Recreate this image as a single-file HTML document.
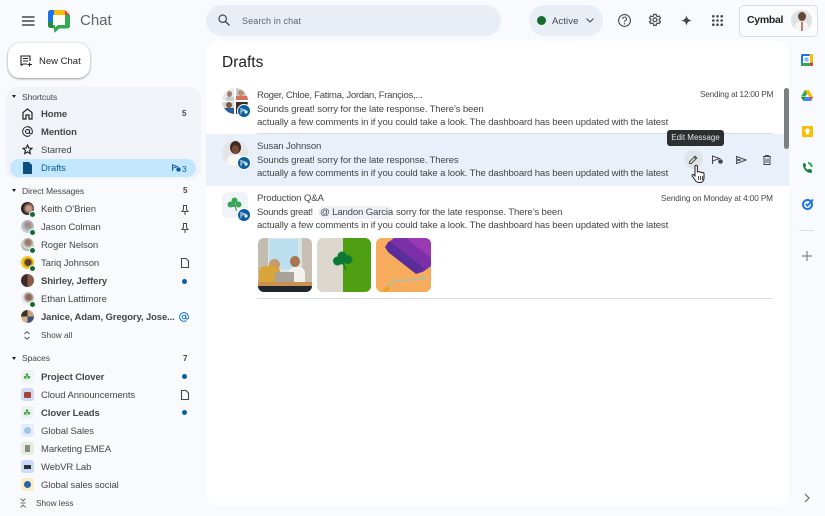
<!DOCTYPE html>
<html><head><meta charset="utf-8">
<style>
html,body{margin:0;padding:0;width:825px;height:516px;overflow:hidden;background:#f8fafe;font-family:"Liberation Sans",sans-serif;color:#444746}
.t{position:absolute;white-space:nowrap;font-size:9.5px;line-height:14px;letter-spacing:.1px}
.b{font-weight:bold;color:#1f1f1f;font-size:9.5px}
.n{position:absolute;left:41px;margin-top:1px;white-space:nowrap;font-size:9.5px;line-height:14px;letter-spacing:-.08px;color:#444746}
.h{position:absolute;left:22px;white-space:nowrap;font-size:8.5px;line-height:12px;color:#444746;letter-spacing:-.08px}
.tri{position:absolute;left:12px;width:0;height:0;border-left:2.5px solid transparent;border-right:2.5px solid transparent;border-top:3px solid #1f1f1f}
.av{position:absolute;left:21px;width:13px;height:13px;border-radius:50%}
.dot{position:absolute;left:29px;width:5px;height:5px;border-radius:50%;background:#146c2e;border:.5px solid #fff}
.sp{position:absolute;left:21px;width:13px;height:13px;border-radius:3px}
.ud{position:absolute;left:182px;width:5px;height:5px;border-radius:50%;background:#0b5e9e}
svg{position:absolute;overflow:visible}
.m{position:absolute;left:257px;white-space:nowrap;font-size:9.6px;line-height:13px;color:#444746;letter-spacing:-.15px}
.s{position:absolute;white-space:nowrap;font-size:8.2px;line-height:14px;letter-spacing:-.17px;color:#444746}
.bd{position:absolute;left:237px;width:12px;height:12px;border-radius:50%;background:#0b5e9e;border:1px solid #fff}
</style></head><body>

<!-- top bar -->
<svg style="left:22px;top:16px" width="13" height="10"><path d="M0 1h12.500M0 5h12.500M0 9h12.500" stroke="#444746" stroke-width="1.400"/></svg>
<svg style="left:48px;top:10px" width="23" height="23" viewBox="0 0 23 23">
<path d="M0 12V2.500A2.500 2.500 0 0 1 2.500 0H6V12z" fill="#1a73e8"/>
<path d="M6 0h11v5H6z" fill="#fbbc04"/>
<path d="M17 0l5 5h-5z" fill="#ea4335"/>
<path d="M0 12h5v6H2.500A2.500 2.500 0 0 1 0 15.500z" fill="#1e8e3e"/>
<path d="M22 5v11a2.500 2.500 0 0 1-2.500 2.500H11.500L6 23V18.500H5V12h12V5z" fill="#34a853"/>
<path d="M5 5h12v10H10l-3 2.500V15H5z" fill="#fff"/>
</svg>
<div class="t" style="left:80px;top:11px;font-size:15px;line-height:19px;color:#5f6368;letter-spacing:0">Chat</div>

<div style="position:absolute;left:8px;top:43px;width:82px;height:35px;background:#fff;border-radius:12px;box-shadow:0 1px 2px rgba(60,64,67,.45),0 0 2px rgba(60,64,67,.2)"></div>
<svg style="left:20px;top:55px" width="13" height="12" viewBox="0 0 13 12"><path d="M1 10.500V1h9v5M3 3.500h5M3 6h5M1 10.500l2-1.500h4M9.500 7.500v4M7.500 9.500h4.500" fill="none" stroke="#1f1f1f" stroke-width="1.100"/></svg>
<div class="t" style="left:39px;top:55px;color:#1f1f1f;font-size:9.500px;letter-spacing:0">New Chat</div>

<!-- search -->
<div style="position:absolute;left:206px;top:5px;width:295px;height:31px;background:#e9eef6;border-radius:16px"></div>
<svg style="left:218px;top:14px" width="12" height="12" viewBox="0 0 12 12"><circle cx="4.700" cy="4.700" r="3.700" fill="none" stroke="#444746" stroke-width="1.200"/><path d="M7.500 7.500l4 4" stroke="#444746" stroke-width="1.300"/></svg>
<div class="t" style="left:242px;top:14px;font-size:9px;color:#5f6368">Search in chat</div>

<!-- status -->
<div style="position:absolute;left:529px;top:5px;width:74px;height:31px;background:#e9eef6;border-radius:16px"></div>
<div style="position:absolute;left:537px;top:16px;width:9px;height:9px;border-radius:50%;background:#146c2e"></div>
<div class="t" style="left:552px;top:15px;font-size:9.500px;color:#444746">Active</div>
<svg style="left:586px;top:18px" width="8" height="5"><path d="M.5.500l3.500 3.500 3.500-3.500" fill="none" stroke="#444746"/></svg>
<svg style="left:618px;top:14px" width="13" height="13" viewBox="0 0 13 13"><circle cx="6.500" cy="6.500" r="5.900" fill="none" stroke="#444746" stroke-width="1.100"/><path d="M4.700 5a1.900 1.900 0 1 1 2.800 1.600c-.7.400-1 .8-1 1.500" fill="none" stroke="#444746"/><circle cx="6.500" cy="9.800" r=".7" fill="#444746"/></svg>
<svg style="left:648px;top:13px" width="14" height="14" viewBox="0 0 14 14"><path d="M5.800.8h2.400l.3 1.700 1.200.6 1.600-.6 1.200 2-1.300 1.100v1.400l1.300 1.100-1.200 2-1.600-.6-1.200.7-.3 1.700H5.800l-.3-1.700-1.200-.7-1.600.6-1.200-2L2.800 7V5.600L1.500 4.500l1.200-2 1.600.6 1.200-.6z" transform="translate(0 .5)" fill="none" stroke="#444746" stroke-width="1.200"/><circle cx="7" cy="6.800" r="1.900" fill="none" stroke="#444746" stroke-width="1.200"/></svg>
<svg style="left:681px;top:15px" width="11" height="11" viewBox="0 0 11 11"><path d="M5.500 0C6 3.500 7.500 5 11 5.500 7.500 6 6 7.500 5.500 11 5 7.500 3.500 6 0 5.500 3.500 5 5 3.500 5.500 0z" fill="#444746"/></svg>
<svg style="left:712px;top:15px" width="11" height="11" fill="#444746"><circle cx="1.300" cy="1.300" r="1.300"/><circle cx="5.500" cy="1.300" r="1.300"/><circle cx="9.700" cy="1.300" r="1.300"/><circle cx="1.300" cy="5.500" r="1.300"/><circle cx="5.500" cy="5.500" r="1.300"/><circle cx="9.700" cy="5.500" r="1.300"/><circle cx="1.300" cy="9.700" r="1.300"/><circle cx="5.500" cy="9.700" r="1.300"/><circle cx="9.700" cy="9.700" r="1.300"/></svg>
<div style="position:absolute;left:739px;top:5px;width:77px;height:30px;border:1px solid #dadce0;border-radius:5px;background:#fbfcfe"></div>
<div class="t" style="left:747px;top:13px;font-size:10.500px;font-weight:bold;color:#1f1f1f;letter-spacing:-.3px">Cymbal</div>
<div style="position:absolute;left:791px;top:10px;width:21px;height:21px;border-radius:50%;overflow:hidden;background:#dfe2e3">
 <div style="position:absolute;left:7px;top:2px;width:8px;height:9px;border-radius:50%;background:#6a4636"></div>
 <div style="position:absolute;left:4px;top:12px;width:13px;height:10px;border-radius:4px;background:#f4f4f4"></div>
 <div style="position:absolute;left:10px;top:12px;width:2px;height:9px;background:#c77a70"></div>
</div>

<!-- Shortcuts panel -->
<div style="position:absolute;left:6px;top:87px;width:195px;height:92px;background:#f0f3f8;border-radius:11px"></div>
<div style="position:absolute;left:10px;top:159px;width:186px;height:18px;background:#c2e7ff;border-radius:9px"></div>
<div class="tri" style="top:95px"></div>
<div class="h" style="top:91px">Shortcuts</div>
<svg style="left:22px;top:108px" width="11" height="12" viewBox="0 0 11 12"><path d="M1 11V4.500L5.500 1 10 4.500V11H7V7H4v4z" fill="none" stroke="#1f1f1f" stroke-width="1.200"/></svg>
<div class="n b" style="top:107px">Home</div>
<div class="t" style="left:182px;top:107px;font-size:8px;font-weight:bold;color:#444746">5</div>
<svg style="left:22px;top:126px" width="11" height="11" viewBox="0 0 11 11"><circle cx="5.500" cy="5.500" r="2" fill="none" stroke="#1f1f1f"/><path d="M7.500 3.500V6.500a1.400 1.400 0 0 0 2.800 0V5.500a4.800 4.800 0 1 0-2 3.900" fill="none" stroke="#1f1f1f"/></svg>
<div class="n b" style="top:125px">Mention</div>
<svg style="left:22px;top:144px" width="11" height="11" viewBox="0 0 11 11"><path d="M5.500 1l1.300 3 3.200.300-2.400 2.100.7 3.200-2.800-1.700-2.800 1.700.7-3.200L1 4.300 4.200 4z" fill="none" stroke="#1f1f1f" stroke-width="1.100"/></svg>
<div class="n" style="top:143px">Starred</div>
<svg style="left:23px;top:162px" width="9" height="12" viewBox="0 0 9 12"><path d="M0 0h6l3 3v9H0z" fill="#0b4f80"/></svg>
<div class="n" style="top:161px;color:#0b5e9e">Drafts</div>
<svg style="left:172px;top:164px" width="9" height="8" viewBox="0 0 9 8"><path d="M.5.800L5 2.500.5 4.500zM.5 4.500V7" fill="none" stroke="#0b5e9e"/><circle cx="6.500" cy="5.500" r="2.200" fill="#0b5e9e"/></svg>
<div class="t" style="left:182px;top:162px;font-size:8.500px;color:#0b5e9e">3</div>

<!-- DMs -->
<div class="tri" style="top:189px"></div>
<div class="h" style="top:185px">Direct Messages</div>
<div class="t" style="left:183px;top:184px;font-size:8px;font-weight:bold">5</div>

<div class="av" style="top:202px;background:radial-gradient(circle at 60% 50%,#c99a86 25%,#2b201c 60%)"></div><div class="dot" style="top:211px"></div>
<div class="n" style="top:202px">Keith O’Brien</div>
<svg style="left:181px;top:205px" width="8" height="10" viewBox="0 0 8 10"><path d="M2 .5h4M2.500.5v4L1 6.500h6L5.500 4.500v-4M4 6.500V10" fill="none" stroke="#444746"/></svg>

<div class="av" style="top:220px;background:radial-gradient(circle at 55% 40%,#a28f85 22%,#b8c5d8 55%,#dfe3ea 90%)"></div><div class="dot" style="top:229px"></div>
<div class="n" style="top:220px">Jason Colman</div>
<svg style="left:181px;top:223px" width="8" height="10" viewBox="0 0 8 10"><path d="M2 .5h4M2.500.5v4L1 6.500h6L5.500 4.500v-4M4 6.500V10" fill="none" stroke="#444746"/></svg>

<div class="av" style="top:238px;background:radial-gradient(circle at 55% 35%,#9a7a68 22%,#d8dbd6 50%,#7d8a7e 90%)"></div><div class="dot" style="top:247px"></div>
<div class="n" style="top:238px">Roger Nelson</div>

<div class="av" style="top:256px;background:radial-gradient(circle at 55% 50%,#5b3d2e 28%,#f6c518 50%)"></div><div class="dot" style="top:265px"></div>
<div class="n" style="top:256px">Tariq Johnson</div>
<svg style="left:181px;top:258px" width="8" height="10" viewBox="0 0 8 10"><path d="M.5.500h4.500l2.500 2.500v6.500h-7z" fill="none" stroke="#444746" stroke-width="1.100"/></svg>

<div class="av" style="top:274px;background:linear-gradient(90deg,#3b2a26 50%,#8c5a48 50%)"></div>
<div class="n b" style="top:274px">Shirley, Jeffery</div>
<div class="ud" style="top:279px;left:182px"></div>

<div class="av" style="top:292px;background:radial-gradient(circle at 60% 40%,#8a6a58 22%,#e9ecf1 55%)"></div><div class="dot" style="top:301px"></div>
<div class="n" style="top:292px">Ethan Lattimore</div>

<div class="av" style="top:310px;background:conic-gradient(#c9a27a 0 25%,#43527a 0 50%,#d7b48c 0 75%,#3c3027 0)"></div>
<div class="n b" style="top:310px;letter-spacing:-.12px">Janice, Adam, Gregory, Jose...</div>
<svg style="left:179px;top:312px" width="10" height="10" viewBox="0 0 11 11"><circle cx="5.500" cy="5.500" r="2" fill="none" stroke="#0b74c4"/><path d="M7.500 3.500V6.500a1.400 1.400 0 0 0 2.800 0V5.500a4.800 4.800 0 1 0-2 3.900" fill="none" stroke="#0b74c4"/></svg>

<svg style="left:24px;top:331px" width="6" height="9" viewBox="0 0 6 9"><path d="M.5 3L3 .7 5.500 3M.5 6L3 8.300 5.500 6" fill="none" stroke="#444746" stroke-width=".9"/></svg>
<div class="t" style="left:41px;top:328px;font-size:8.300px;letter-spacing:0">Show all</div>

<!-- Spaces -->
<div class="tri" style="top:357px"></div>
<div class="h" style="top:352px">Spaces</div>
<div class="t" style="left:183px;top:352px;font-size:8px;font-weight:bold">7</div>

<div class="sp" style="top:370px;background:#eef2f6"></div><div class="t" style="left:23px;top:370px;font-size:9px;color:#3aa63a">☘</div>
<div class="n b" style="top:370px">Project Clover</div><div class="ud" style="top:374px"></div>

<div class="sp" style="top:388px;background:#cfdcf5"></div><div style="position:absolute;left:24px;top:392px;width:7px;height:6px;background:#a8443a;border-radius:1px"></div>
<div class="n" style="top:388px">Cloud Announcements</div>
<svg style="left:181px;top:390px" width="8" height="10" viewBox="0 0 8 10"><path d="M.5.500h4.500l2.500 2.500v6.500h-7z" fill="none" stroke="#444746" stroke-width="1.100"/></svg>

<div class="sp" style="top:406px;background:#eef2f6"></div><div class="t" style="left:23px;top:406px;font-size:9px;color:#3aa63a">☘</div>
<div class="n b" style="top:406px">Clover Leads</div><div class="ud" style="top:410px"></div>

<div class="sp" style="top:424px;background:#e3edfb"></div><div style="position:absolute;left:24px;top:427px;width:7px;height:7px;border-radius:50%;background:#9cc8e6"></div>
<div class="n" style="top:424px">Global Sales</div>

<div class="sp" style="top:442px;background:#e4ece4"></div><div style="position:absolute;left:25px;top:445px;width:5px;height:7px;background:#8a8a7e"></div>
<div class="n" style="top:442px">Marketing EMEA</div>

<div class="sp" style="top:460px;background:#c9dcf7"></div><div style="position:absolute;left:24px;top:465px;width:7px;height:4px;background:#2a2f3a"></div>
<div class="n" style="top:460px">WebVR Lab</div>

<div class="sp" style="top:478px;background:#fbeec2"></div><div style="position:absolute;left:24px;top:481px;width:7px;height:7px;border-radius:50%;background:#2a62a8"></div>
<div class="n" style="top:478px">Global sales social</div>

<svg style="left:20px;top:498px" width="6" height="10" viewBox="0 0 6 10"><path d="M.5.500L3 3 5.500.500M.5 9.500L3 7l2.500 2.500M.5 5h5" fill="none" stroke="#444746" stroke-width=".8"/></svg>
<div class="t" style="left:36px;top:496px;font-size:8.300px;letter-spacing:-.05px">Show less</div>

<!-- Main -->
<div style="position:absolute;left:206px;top:41px;width:583px;height:465px;background:#fff;border-radius:12px"></div>
<div style="position:absolute;left:206px;top:134px;width:583px;height:52px;background:#e9f0fa"></div>
<div class="t" style="left:222px;top:53px;font-size:15.500px;line-height:19px;color:#1f1f1f;letter-spacing:0">Drafts</div>

<!-- row 1 -->
<div style="position:absolute;left:222px;top:88px;width:26px;height:26px;border-radius:50%;overflow:hidden;background:#fff">
 <div style="position:absolute;left:0;top:0;width:12px;height:12px;background:#e6e9ec"></div>
 <div style="position:absolute;left:5px;top:3px;width:5px;height:6px;border-radius:50%;background:#a8796a"></div>
 <div style="position:absolute;left:4px;top:9px;width:8px;height:4px;background:#c5cdd4"></div>
 <div style="position:absolute;left:14px;top:0;width:12px;height:12px;background:#bccdd8"></div>
 <div style="position:absolute;left:16px;top:2px;width:6px;height:6px;border-radius:50%;background:#c98a6e"></div>
 <div style="position:absolute;left:14px;top:8px;width:12px;height:4px;background:#d9705a"></div>
 <div style="position:absolute;left:0;top:14px;width:12px;height:12px;background:#d9d6c8"></div>
 <div style="position:absolute;left:4px;top:14px;width:6px;height:6px;border-radius:50%;background:#7a5a48"></div>
 <div style="position:absolute;left:2px;top:20px;width:10px;height:6px;background:#2f5a9a"></div>
 <div style="position:absolute;left:14px;top:14px;width:12px;height:12px;background:#3a2d28"></div>
</div>
<div class="bd" style="top:104px"><svg style="left:2.500px;top:3px" width="7" height="6" viewBox="0 0 7 6"><path d="M0 .5L4 2 0 3.500zM0 3.500V6" fill="none" stroke="#dbe9f6" stroke-width=".9"/><circle cx="5" cy="4" r="1.700" fill="#dbe9f6"/></svg></div>
<div class="m" style="top:89px;letter-spacing:-.3px">Roger, Chloe, Fatima, Jordan, Françios,...</div>
<div class="m" style="top:103px">Sounds great! sorry for the late response. There’s been</div>
<div class="m" style="top:116px">actually a few comments in if you could take a look. The dashboard has been updated with the latest</div>
<div class="s" style="left:700px;top:88px">Sending at 12:00 PM</div>
<div style="position:absolute;left:257px;top:133px;width:516px;height:1px;background:#d9dce1"></div>

<!-- row 2 -->
<div style="position:absolute;left:222px;top:140px;width:26px;height:26px;border-radius:50%;overflow:hidden;background:#e4e5e6">
 <div style="position:absolute;left:8px;top:1px;width:11px;height:13px;border-radius:50%;background:#3f2a22"></div>
 <div style="position:absolute;left:10px;top:5px;width:7px;height:9px;border-radius:50%;background:#7a4c38"></div>
 <div style="position:absolute;left:5px;top:15px;width:16px;height:12px;border-radius:5px;background:#f7f7f7"></div>
</div>
<div class="bd" style="top:156px"><svg style="left:2.500px;top:3px" width="7" height="6" viewBox="0 0 7 6"><path d="M0 .5L4 2 0 3.500zM0 3.500V6" fill="none" stroke="#dbe9f6" stroke-width=".9"/><circle cx="5" cy="4" r="1.700" fill="#dbe9f6"/></svg></div>
<div class="m" style="top:140px">Susan Johnson</div>
<div class="m" style="top:154px">Sounds great! sorry for the late response. Theres</div>
<div class="m" style="top:167px">actually a few comments in if you could take a look. The dashboard has been updated with the latest</div>

<div style="position:absolute;left:684px;top:150px;width:19px;height:19px;border-radius:50%;background:#dfe3e8"></div>
<svg style="left:689px;top:155px" width="9" height="9" viewBox="0 0 9 9"><path d="M.5 8.500v-1.800L6 1.200l1.800 1.800L2.300 8.500zM5.300 2l1.800 1.800" fill="none" stroke="#444746" stroke-width="1"/></svg>
<svg style="left:712px;top:155px" width="11" height="10" viewBox="0 0 11 10"><path d="M.5 1l7 2.500-7 2.500zM.5 6V9" fill="none" stroke="#444746" stroke-width="1"/><circle cx="8.500" cy="6.500" r="2.300" fill="#444746"/></svg>
<svg style="left:736px;top:156px" width="11" height="8" viewBox="0 0 11 8"><path d="M.5.500L10 4 .5 7.500V4.800L5 4 .5 3.200z" fill="none" stroke="#444746" stroke-width="1"/></svg>
<svg style="left:763px;top:155px" width="8" height="10" viewBox="0 0 8 10"><path d="M0 1.500h8M2.500 1.500V.5h3v1M1 1.500V9.500h6v-8M3 3.500v4.500M5 3.500v4.500" fill="none" stroke="#444746" stroke-width="1"/></svg>
<svg style="left:691px;top:165px" width="16" height="19" viewBox="0 0 16 19"><path d="M4 1.500a1.200 1.200 0 0 1 2.400 0V7l1-.3c.6-.2 1.200 0 1.400.5l.8-.2c.6-.1 1.100.2 1.300.6l.8-.1c.8 0 1.300.6 1.300 1.300V13c0 2.500-1.500 4.500-4 4.500H8c-1.800 0-3-1-4-2.500L1.200 11c-.6-.9.600-2 1.500-1.200L4 11z" fill="#fff" stroke="#1f1f1f" stroke-width="1"/><path d="M7.500 11v4M9.500 11v4M11.500 11v4" stroke="#1f1f1f" stroke-width=".8"/></svg>

<div style="position:absolute;left:667px;top:130px;width:57px;height:16px;background:#2d2e30;border-radius:3px;color:#e3e3e3;font-size:8px;line-height:16px;text-align:center;white-space:nowrap">Edit Message</div>

<!-- row 3 -->
<div style="position:absolute;left:222px;top:192px;width:26px;height:26px;border-radius:6px;background:#f0f4f9"></div>
<svg style="left:227px;top:197px" width="15" height="15" viewBox="0 0 15 15" fill="#34a853"><circle cx="7.500" cy="3.500" r="3"/><circle cx="3.500" cy="7.500" r="3"/><circle cx="11.500" cy="7.500" r="3"/><circle cx="6" cy="8" r="2"/><path d="M7.500 7l2 7" stroke="#1e8e3e" fill="none"/></svg>
<div class="bd" style="top:208px"><svg style="left:2.500px;top:3px" width="7" height="6" viewBox="0 0 7 6"><path d="M0 .5L4 2 0 3.500zM0 3.500V6" fill="none" stroke="#dbe9f6" stroke-width=".9"/><circle cx="5" cy="4" r="1.700" fill="#dbe9f6"/></svg></div>
<div class="m" style="top:192px">Production Q&amp;A</div>
<div class="m" style="top:206px;letter-spacing:-.3px">Sounds great!</div>
<div style="position:absolute;left:318px;top:206px;width:75px;height:13px;border-radius:7px;background:#eef2f8"></div>
<div class="m" style="top:206px;left:320px">@ Landon Garcia</div>
<div class="m" style="top:206px;left:396px">sorry for the late response. There’s been</div>
<div class="m" style="top:219px">actually a few comments in if you could take a look. The dashboard has been updated with the latest</div>
<div class="s" style="left:661px;top:192px;letter-spacing:-.1px">Sending on Monday at 4:00 PM</div>

<!-- images -->
<div style="position:absolute;left:258px;top:238px;width:54px;height:54px;border-radius:6px;overflow:hidden;background:#d9e4e6">
 <div style="position:absolute;left:0;top:0;width:10px;height:44px;background:#c2bcae"></div>
 <div style="position:absolute;left:11px;top:1px;width:29px;height:30px;background:#bcdff0"></div>
 <div style="position:absolute;left:44px;top:0;width:10px;height:44px;background:#c7bfb4"></div>
 <div style="position:absolute;left:11px;top:21px;width:11px;height:11px;border-radius:50%;background:#c99a6a"></div>
 <div style="position:absolute;left:1px;top:28px;width:21px;height:16px;border-radius:6px 6px 0 0;background:#d9a43a"></div>
 <div style="position:absolute;left:32px;top:18px;width:10px;height:11px;border-radius:50%;background:#a8764e"></div>
 <div style="position:absolute;left:31px;top:29px;width:16px;height:15px;border-radius:6px 6px 0 0;background:#f4f1ee"></div>
 <div style="position:absolute;left:17px;top:34px;width:19px;height:10px;background:#a9a299"></div>
 <div style="position:absolute;left:0;top:44px;width:54px;height:4px;background:#c9934f"></div>
 <div style="position:absolute;left:0;top:48px;width:54px;height:6px;background:#20262e"></div>
</div>
<div style="position:absolute;left:317px;top:238px;width:54px;height:54px;border-radius:6px;overflow:hidden;background:#dcd8d0">
 <div style="position:absolute;left:26px;top:0;width:28px;height:54px;background:#4f9f12"></div>
 <svg style="left:16px;top:13px" width="20" height="19" viewBox="0 0 20 19" fill="#0d7a34"><circle cx="9" cy="5" r="4.500"/><circle cx="4.500" cy="10" r="4.500"/><circle cx="15" cy="8.500" r="4.500"/><circle cx="9" cy="10" r="3.500"/><path d="M10 12l3 7" stroke="#0d7a34" stroke-width="1.300"/></svg>
</div>
<div style="position:absolute;left:376px;top:238px;width:55px;height:54px;border-radius:6px;overflow:hidden;background:#f7ab5c">
 <svg style="left:0;top:0" width="55" height="54" viewBox="0 0 55 54">
  <path d="M18 0H55V28L47 34 13 4z" fill="#7b2fa8"/>
  <path d="M30 0H55V20z" fill="#a63fb8" opacity=".7"/>
  <path d="M13 3L9 9 12 14 40 36 46 34 48 30z" fill="#5b2d9a"/>
  <path d="M47 36L48 41 17 43 10 50" fill="none" stroke="#9cc5b8" stroke-width="1.300"/>
  <path d="M6 54l5-6 3 2-3 4z" fill="#e9a520"/>
 </svg>
</div>
<div style="position:absolute;left:257px;top:298px;width:516px;height:1px;background:#d9dce1"></div>

<!-- scrollbar -->
<div style="position:absolute;left:784px;top:88px;width:5px;height:61px;border-radius:3px;background:#7d7f80"></div>

<!-- right rail -->
<svg style="left:801px;top:54px" width="12" height="12" viewBox="0 0 12 12"><rect width="12" height="12" rx="1.500" fill="#1a73e8"/><rect x="8.500" width="3.500" height="12" fill="#fbbc04"/><rect y="8.500" width="12" height="3.500" fill="#34a853"/><rect x="2" y="2" width="7" height="7" fill="#fff"/><rect x="9" y="9" width="3" height="3" fill="#ea4335"/><rect x="3.500" y="3.500" width="4" height="4" fill="#8ab4f8"/></svg>
<svg style="left:801px;top:90px" width="12" height="11" viewBox="0 0 12 11"><path d="M4 0h4L4.500 6.500H0z" fill="#34a853"/><path d="M4 0h4l4 7H8z" fill="#fbbc04"/><path d="M2.500 11L4.500 7H12l-2 4z" fill="#4285f4"/><path d="M10 11l2-4H9.500z" fill="#ea4335"/><path d="M0 7l2.500 4L4.500 7z" fill="#1e8e3e"/></svg>
<svg style="left:802px;top:126px" width="11" height="11" viewBox="0 0 11 11"><rect width="11" height="11" rx="1" fill="#fbbc04"/><circle cx="5.500" cy="4.800" r="2.400" fill="#fff"/><rect x="4.300" y="7" width="2.400" height="1.500" fill="#fff"/></svg>
<svg style="left:802px;top:162px" width="11" height="12" viewBox="0 0 11 12"><path d="M1 1.500L3 1l1.200 2.800-1 1.200c.5 1.300 1.300 2.100 2.600 2.700l1.200-1L10 8v2l-1 1C4.500 11 .5 6.500 1 1.500z" fill="#188038"/><path d="M6 0a5 5 0 0 1 4.800 5H8.700A3 3 0 0 0 6 2z" fill="#34a853"/></svg>
<svg style="left:802px;top:198px" width="12" height="12" viewBox="0 0 12 12"><circle cx="5.500" cy="6.500" r="4.500" fill="none" stroke="#1a73e8" stroke-width="2"/><path d="M3.800 6l1.700 1.700L11 1.500" fill="none" stroke="#1a73e8" stroke-width="1.800"/></svg>
<div style="position:absolute;left:799px;top:230px;width:15px;height:1px;background:#dadce0"></div>
<svg style="left:802px;top:251px" width="10" height="10"><path d="M5 0v10M0 5h10" stroke="#80868b" stroke-width="1.200"/></svg>
<svg style="left:804px;top:493px" width="6" height="10"><path d="M1 1l4 4-4 4" fill="none" stroke="#5f6368" stroke-width="1.100"/></svg>

</body></html>
